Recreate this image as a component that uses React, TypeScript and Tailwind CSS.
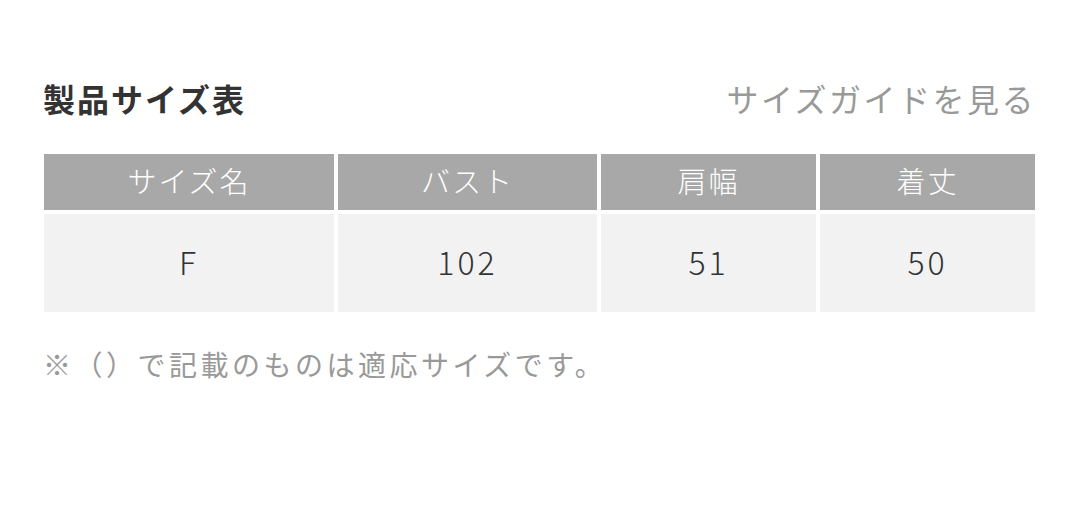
import React from "react";

const font = { fontFamily: '"Noto Sans CJK JP", "Noto Sans", sans-serif' };

export default function App() {
  const headers = ["サイズ名", "バスト", "肩幅", "着丈"];
  const values = ["F", "102", "51", "50"];
  const cols = "grid-cols-[290px_259px_215px_215px]";
  return (
    <div className="w-[1080px] h-[516px] bg-white" style={font}>
      <div className="pl-[43px] pr-[44px] pt-[76px]">
        <div className="flex items-center justify-between h-[44px]">
          <h2 className="text-[32px] font-bold text-[#333] tracking-[2px] leading-none">製品サイズ表</h2>
          <span className="text-[32px] text-[#999] tracking-[2.5px] leading-none">サイズガイドを見る</span>
        </div>
        <div className="mt-[34px] pl-[1px]">
          <div className={`grid ${cols} gap-x-[4px]`}>
            {headers.map((h) => (
              <div key={h} className="h-[56px] pb-[3px] bg-[#a8a8a8] flex items-center justify-center text-white text-[29px] font-light tracking-[2px]">
                {h}
              </div>
            ))}
          </div>
          <div className={`grid ${cols} gap-x-[4px] mt-[4px]`}>
            {values.map((v, i) => (
              <div key={i} className="h-[98px] pb-[5px] bg-[#f2f2f2] flex items-center justify-center text-[#333] text-[32px] font-light tracking-[3px]">
                {v}
              </div>
            ))}
          </div>
        </div>
        <p className="mt-[38px] text-[28px] text-[#999] tracking-[3.5px] leading-none">※（）で記載のものは適応サイズです。</p>
      </div>
    </div>
  );
}
